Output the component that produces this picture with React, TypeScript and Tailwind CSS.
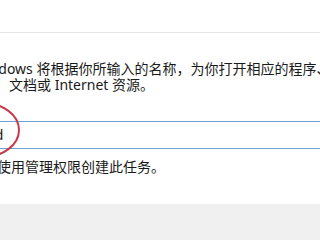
export default function App() {
  const font = { fontFamily: "'Noto Sans', 'Noto Sans CJK SC', sans-serif" };

  return (
    <div
      className="relative h-screen w-screen overflow-hidden bg-white text-[14px] leading-[16px] text-[#1a1a1a]"
      style={font}
    >
      {/* title area */}
      <div className="h-[33px] border-b border-[#e6e6e6]" />

      {/* description */}
      <div className="mt-[28px] whitespace-nowrap">
        <p className="-ml-[27px]">Windows 将根据你所输入的名称，为你打开相应的程序、</p>
        <p className="-ml-[47px]">文件夹、文档或 Internet 资源。</p>
      </div>

      {/* open input */}
      <div className="relative mt-[28px]">
        <div className="-ml-[40px] flex h-[28px] w-[400px] items-center border border-[#6f9fd6] bg-white pl-[14px] whitespace-nowrap">
          cmd
        </div>
        <svg
          className="pointer-events-none absolute -left-[56px] -top-[21px]"
          width="80"
          height="60"
          viewBox="0 0 80 60"
        >
          <ellipse cx="39" cy="30" rx="36" ry="27" fill="none" stroke="#c8394a" strokeWidth="2" />
        </svg>
      </div>

      <p className="mt-[10px] -ml-[3px] whitespace-nowrap">使用管理权限创建此任务。</p>

      {/* footer */}
      <div className="mt-[29px] h-[60px] bg-[#f0f0f0]" />
    </div>
  );
}
